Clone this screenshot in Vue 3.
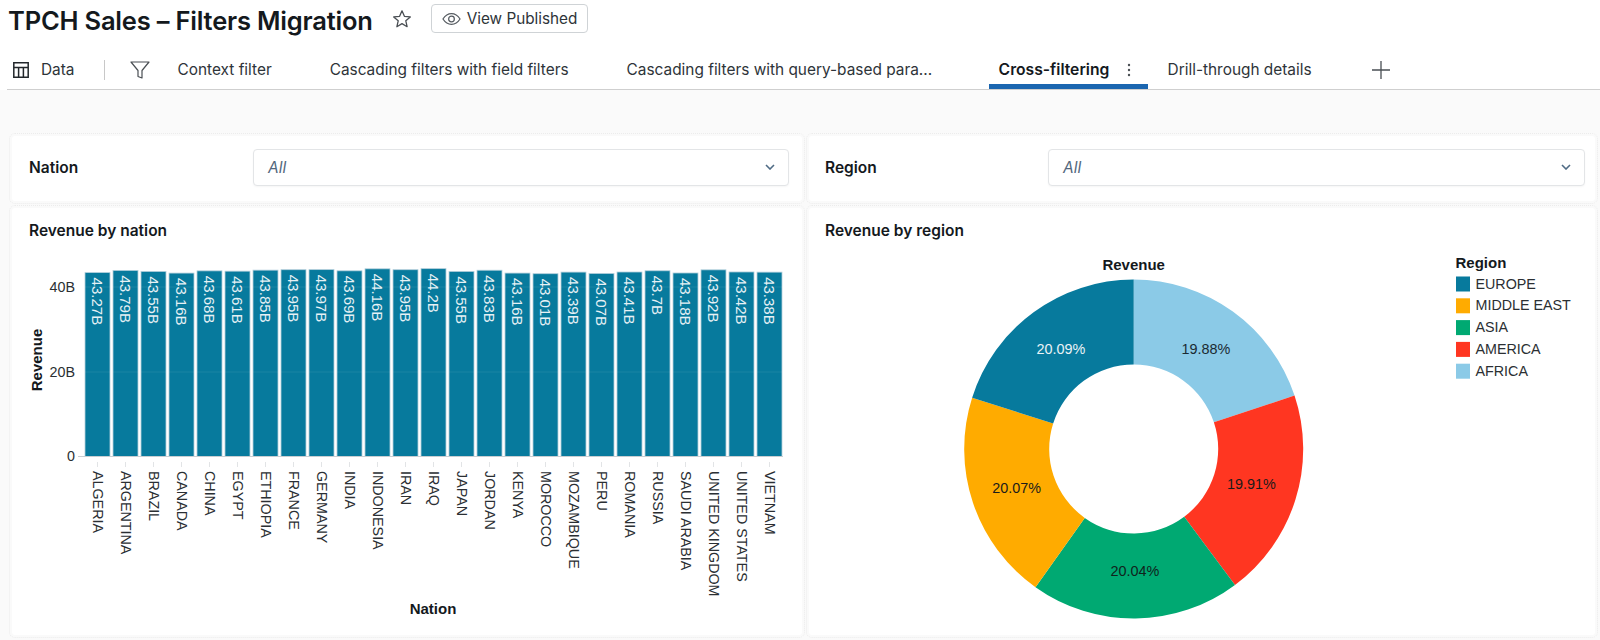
<script setup>
const tabs = [
  { label: 'Context filter' },
  { label: 'Cascading filters with field filters' },
  { label: 'Cascading filters with query-based para...', cls: 'long' },
  { label: 'Cross-filtering', cls: 'active', menu: true },
  { label: 'Drill-through details' }
]

const nations = [
  ['ALGERIA', 43.27, '43.27B'], ['ARGENTINA', 43.79, '43.79B'], ['BRAZIL', 43.55, '43.55B'],
  ['CANADA', 43.16, '43.16B'], ['CHINA', 43.68, '43.68B'], ['EGYPT', 43.61, '43.61B'],
  ['ETHIOPIA', 43.85, '43.85B'], ['FRANCE', 43.95, '43.95B'], ['GERMANY', 43.97, '43.97B'],
  ['INDIA', 43.69, '43.69B'], ['INDONESIA', 44.16, '44.16B'], ['IRAN', 43.95, '43.95B'],
  ['IRAQ', 44.2, '44.2B'], ['JAPAN', 43.55, '43.55B'], ['JORDAN', 43.83, '43.83B'],
  ['KENYA', 43.16, '43.16B'], ['MOROCCO', 43.01, '43.01B'], ['MOZAMBIQUE', 43.39, '43.39B'],
  ['PERU', 43.07, '43.07B'], ['ROMANIA', 43.41, '43.41B'], ['RUSSIA', 43.7, '43.7B'],
  ['SAUDI ARABIA', 43.18, '43.18B'], ['UNITED KINGDOM', 43.92, '43.92B'],
  ['UNITED STATES', 43.42, '43.42B'], ['VIETNAM', 43.38, '43.38B']
]

const BASE = 455.5
const bars = nations.map(([name, value, label], i) => {
  const h = value * 4.25
  const x = 85 + i * 28
  return { name, label, x, cx: x + 12.5, y: BASE - h, h }
})
const yTicks = [
  { label: '40B', y: 286 },
  { label: '20B', y: 371 },
  { label: '0', y: 455 }
]

const CX = 1133.7
const CY = 448
const R = 169.5
const r = 84.5
function pt(rad, deg) {
  const a = (deg * Math.PI) / 180
  return `${(CX + rad * Math.sin(a)).toFixed(2)} ${(CY - rad * Math.cos(a)).toFixed(2)}`
}
function slice(a, b) {
  return `M${pt(R, a)}A${R} ${R} 0 0 1 ${pt(R, b)}L${pt(r, b)}A${r} ${r} 0 0 0 ${pt(r, a)}Z`
}
const slices = [
  { name: 'AFRICA', color: '#8bcae7', from: 0, to: 71.6, label: '19.88%', lx: 1206, ly: 347.5, ink: '#1b2a33' },
  { name: 'AMERICA', color: '#ff3621', from: 71.6, to: 143.3, label: '19.91%', lx: 1251.5, ly: 483, ink: '#1b1b1b' },
  { name: 'ASIA', color: '#00a972', from: 143.3, to: 215.4, label: '20.04%', lx: 1135, ly: 570, ink: '#10231c' },
  { name: 'MIDDLE EAST', color: '#ffab00', from: 215.4, to: 287.6, label: '20.07%', lx: 1016.6, ly: 486.5, ink: '#1b1b1b' },
  { name: 'EUROPE', color: '#077a9d', from: 287.6, to: 360, label: '20.09%', lx: 1060.8, ly: 347.5, ink: '#e9f3f7' }
].map((s) => ({ ...s, d: slice(s.from, s.to) }))

const legend = ['EUROPE', 'MIDDLE EAST', 'ASIA', 'AMERICA', 'AFRICA'].map((name, i) => ({
  name,
  color: slices.find((s) => s.name === name).color,
  y: 283 + i * 21.8
}))
</script>

<template>
  <div class="page">
    <header class="top">
      <h1 class="title">TPCH Sales – Filters Migration</h1>
      <svg class="star" viewBox="0 0 20 20" width="20" height="20" aria-hidden="true">
        <path d="M10 1.8l2.4 5.5 5.9.6-4.5 3.9 1.3 5.9L10 14.6l-5.1 3.1 1.3-5.9L1.7 7.9l5.9-.6z" fill="none" stroke="#4a4f54" stroke-width="1.3" stroke-linejoin="round" />
      </svg>
      <button class="publish" type="button">
        <svg viewBox="0 0 20 14" width="19" height="14" aria-hidden="true">
          <path d="M1 7c2.4-3.7 5.4-5.6 9-5.6s6.600 1.900 9 5.600c-2.400 3.700-5.400 5.600-9 5.600S3.400 10.700 1 7z" fill="none" stroke="#555b61" stroke-width="1.300" />
          <circle cx="10" cy="7" r="3" fill="none" stroke="#555b61" stroke-width="1.300" />
        </svg>
        <span>View Published</span>
      </button>
    </header>

    <nav class="tabbar">
      <div class="data">
        <svg viewBox="0 0 16 16" width="16" height="16" aria-hidden="true">
          <path d="M.8.8h14.400v14.400H.8zM.8 5.500h14.400M5.600 5.500v9.700M10.400 5.500v9.700" fill="none" stroke="#22272b" stroke-width="1.500" />
        </svg>
        <span>Data</span>
      </div>
      <span class="divider"></span>
      <svg class="funnel" viewBox="0 0 20 20" width="20" height="20" aria-hidden="true">
        <path d="M1 2h18l-7 8.500V18l-4-1.500v-6z" fill="none" stroke="#4a4f54" stroke-width="1.200" stroke-linejoin="round" />
      </svg>
      <div class="tabs">
        <div v-for="t in tabs" :key="t.label" class="tab" :class="t.cls">
          <span>{{ t.label }}</span>
          <svg v-if="t.menu" class="kebab" viewBox="0 0 4 14" width="4" height="14" aria-hidden="true">
            <circle cx="2" cy="2" r="1.200" fill="#4a4f54" />
            <circle cx="2" cy="7" r="1.200" fill="#4a4f54" />
            <circle cx="2" cy="12" r="1.200" fill="#4a4f54" />
          </svg>
        </div>
        <svg class="plus" viewBox="0 0 18 18" width="18" height="18" aria-hidden="true">
          <path d="M9 0v18M0 9h18" stroke="#4a4f54" stroke-width="1.300" />
        </svg>
      </div>
    </nav>

    <main class="board">
      <section class="card filter nation">
        <label class="flabel">Nation</label>
        <div class="select">
          <em>All</em>
          <svg viewBox="0 0 10 6" width="10" height="6" aria-hidden="true"><path d="M1 1l4 4 4-4" fill="none" stroke="#4f6b85" stroke-width="1.600" /></svg>
        </div>
      </section>
      <section class="card filter region">
        <label class="flabel">Region</label>
        <div class="select">
          <em>All</em>
          <svg viewBox="0 0 10 6" width="10" height="6" aria-hidden="true"><path d="M1 1l4 4 4-4" fill="none" stroke="#4f6b85" stroke-width="1.600" /></svg>
        </div>
      </section>

      <section class="card chart">
        <h2 class="ctitle">Revenue by nation</h2>
        <svg class="plot" viewBox="12 241 790 393" width="790" height="393">
          <rect v-for="b in bars" :key="b.name" :x="b.x" :y="b.y" width="25" :height="b.h" fill="#077a9d" stroke="#b4cfdb" stroke-width="0.800" />
          <line v-for="t in yTicks.slice(0, 2)" :key="t.label" x1="78" x2="783" :y1="t.y" :y2="t.y" stroke="#ffffff" stroke-opacity="0.080" />
          <line x1="78" x2="783" :y1="BASE" :y2="BASE" stroke="#c9ced2" stroke-width="1.200" />
          <text v-for="t in yTicks" :key="t.label" class="axis" x="75" :y="t.y" text-anchor="end" dominant-baseline="central">{{ t.label }}</text>
          <g v-for="b in bars" :key="b.name + 'l'">
            <text class="val" :transform="`translate(${b.cx} ${b.y + 5}) rotate(90)`" dominant-baseline="central">{{ b.label }}</text>
            <line :x1="b.cx" :x2="b.cx" y1="461" y2="466" stroke="#e2e4e6" />
            <text class="axis" :transform="`translate(${b.cx} 470) rotate(90)`" dominant-baseline="central">{{ b.name }}</text>
          </g>
          <text class="atitle" transform="translate(36 359) rotate(-90)" text-anchor="middle" dominant-baseline="central">Revenue</text>
          <text class="atitle" x="433" y="607" text-anchor="middle" dominant-baseline="central">Nation</text>
        </svg>
      </section>

      <section class="card chart region-chart">
        <h2 class="ctitle">Revenue by region</h2>
        <svg class="plot" viewBox="809 241 786 393" width="786" height="393">
          <text class="atitle" :x="CX" y="263.500" text-anchor="middle" dominant-baseline="central">Revenue</text>
          <path v-for="s in slices" :key="s.name" :d="s.d" :fill="s.color" />
          <text v-for="s in slices" :key="s.label" class="pct" :x="s.lx" :y="s.ly" :fill="s.ink" text-anchor="middle" dominant-baseline="central">{{ s.label }}</text>
          <text class="atitle" x="1455.500" y="261.500" dominant-baseline="central">Region</text>
          <g v-for="l in legend" :key="l.name">
            <rect x="1456" :y="l.y - 7.500" width="14" height="15" :fill="l.color" />
            <text class="axis" x="1475.500" :y="l.y - 0.500" dominant-baseline="central">{{ l.name }}</text>
          </g>
        </svg>
      </section>
    </main>
  </div>
</template>

<style scoped>
.page {
  width: 1600px;
  height: 640px;
  overflow: hidden;
  background: #fff;
  font-family: Inter, "Noto Sans", sans-serif;
  color: #1f272d;
}
.top {
  height: 37px;
  display: flex;
  align-items: center;
  padding-left: 8px;
  margin-bottom: 13px;
}
.title {
  margin: 3px 0 0;
  font-size: 25.500px;
  font-weight: 600;
  letter-spacing: -0.2px;
  color: #14191d;
  white-space: nowrap;
}
.star {
  margin-left: 19px;
}
.publish {
  margin-left: 19px;
  width: 157px;
  height: 29px;
  display: flex;
  align-items: center;
  gap: 6px;
  padding: 0 0 0 10px;
  background: #fff;
  border: 1px solid #cfd3d6;
  border-radius: 4px;
  font: 15.300px Inter, sans-serif;
  color: #2e3439;
}
.tabbar {
  margin-left: 7px;
  height: 39px;
  display: flex;
  align-items: stretch;
  border-bottom: 1px solid #cfcfcf;
  font-size: 15.400px;
  color: #2e3439;
}
.data {
  display: flex;
  align-items: center;
  gap: 12px;
  padding-left: 6px;
  width: 91px;
}
.divider {
  width: 1px;
  height: 20px;
  background: #c8c8c8;
  align-self: center;
}
.funnel {
  align-self: center;
  margin-left: 25px;
}
.tabs {
  display: flex;
  align-items: stretch;
  gap: 38px;
  margin-left: 17.500px;
}
.tab {
  display: flex;
  align-items: center;
  padding: 0 10px;
  white-space: nowrap;
}
.tab.long {
  width: 334px;
  box-sizing: border-box;
}
.tab.active {
  width: 159px;
  box-sizing: border-box;
  margin-right: -28px;
  font-size: 15.700px;
  font-weight: 600;
  color: #14191d;
  box-shadow: inset 0 -5px 0 #1b66b0;
}
.kebab {
  margin-left: 18px;
}
.plus {
  align-self: center;
  margin-left: 12px;
}
.board {
  height: 551px;
  box-sizing: border-box;
  background: #fafafa;
  padding: 46px 5px 0 12px;
  display: grid;
  grid-template-columns: 790px 786px;
  grid-template-rows: 65px 427px;
  gap: 7px;
}
.card {
  background: #fff;
  border-radius: 3px;
  outline: 1px dotted #ececec;
  outline-offset: 2px;
}
.filter {
  display: flex;
  align-items: center;
}
.flabel {
  margin-bottom: 2px;
  font-size: 15.500px;
  font-weight: 600;
  color: #14191d;
}
.nation {
  padding: 0 13px 0 17px;
}
.nation .flabel {
  width: 224px;
}
.region {
  padding: 0 10px 0 16px;
}
.region .flabel {
  width: 223px;
}
.select {
  flex: 1;
  height: 37px;
  margin-bottom: 3px;
  box-sizing: border-box;
  display: flex;
  align-items: center;
  justify-content: space-between;
  padding: 0 13px 0 14px;
  background: #fff;
  border: 1px solid #e3e5e7;
  border-radius: 4px;
  box-shadow: 0 1px 2px rgba(0, 0, 0, 0.04);
}
.select em {
  font-size: 15.500px;
  color: #52677c;
}
.chart {
  display: flex;
  flex-direction: column;
}
.ctitle {
  margin: 13px 0 1px 17px;
  font-size: 15.500px;
  line-height: 20px;
  font-weight: 600;
  color: #14191d;
}
.region-chart .ctitle {
  margin-left: 16px;
}
.plot {
  display: block;
}
.plot text {
  font-family: "Liberation Sans", Arial, sans-serif;
}
.axis {
  font-size: 14.300px;
  fill: #2b2f33;
}
.val {
  font-size: 15px;
  fill: #e6f1f5;
}
.atitle {
  font-size: 15px;
  font-weight: 700;
  fill: #14191d;
}
.pct {
  font-size: 14.400px;
}
</style>
